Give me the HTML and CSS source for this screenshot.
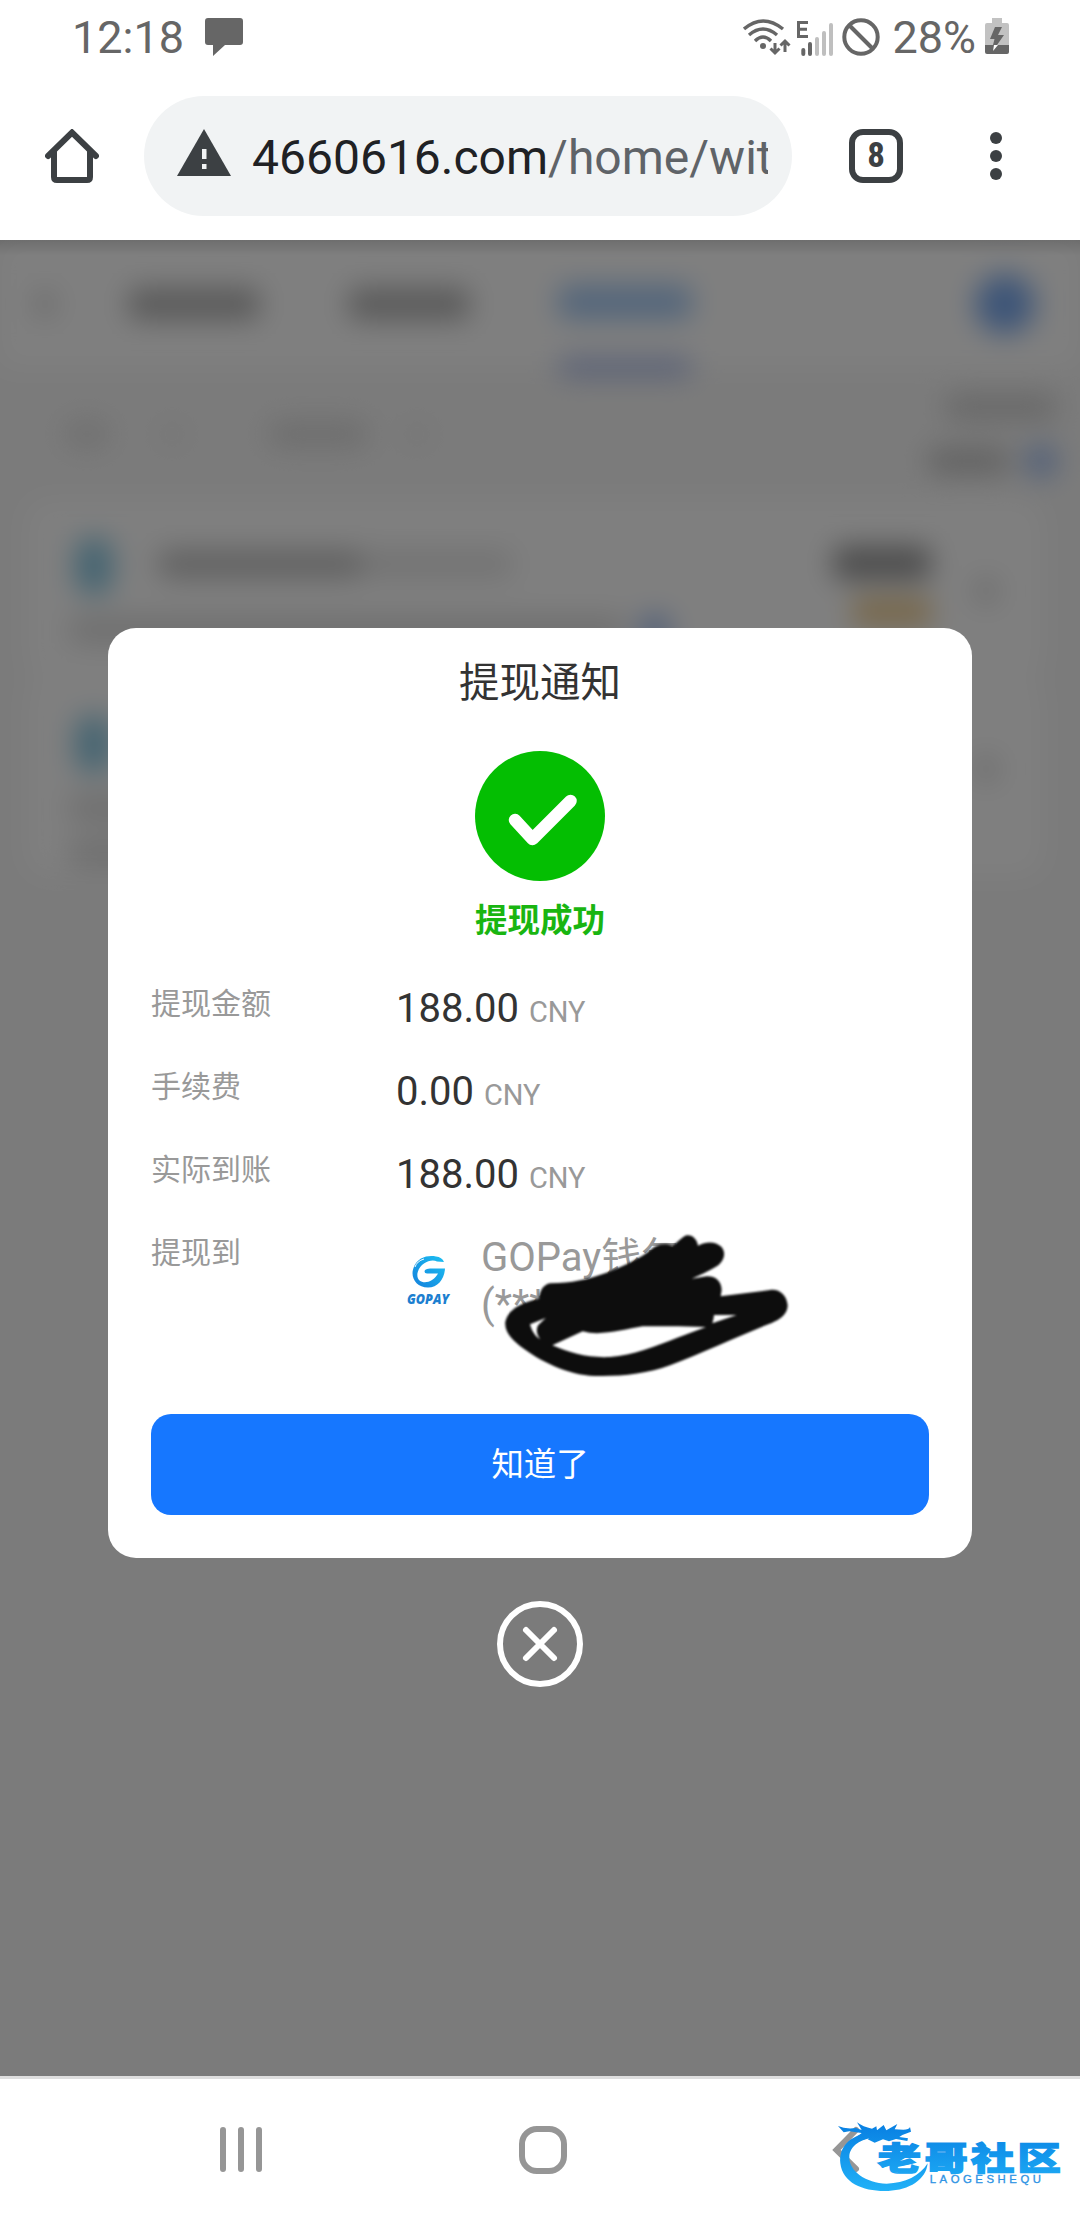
FILE: index.html
```html
<!DOCTYPE html>
<html lang="zh-CN">
<head>
    <meta charset="UTF-8">
    <meta name="viewport" content="width=device-width, initial-scale=1.0">
    <title>提现通知</title>
    <link rel="stylesheet" href="styles.css">
</head>
<body>
    <div class="status-bar">
        <span class="clock">12:18</span>
        <svg class="chat-icon" width="38" height="40" viewBox="0 0 38 40"><path d="M3 0H35Q38 0 38 3V24Q38 27 35 27H20L8 38V27H3Q0 27 0 24V3Q0 0 3 0Z" fill="#666"/></svg>
        <div class="status-right">
            <svg width="48" height="38" viewBox="0 0 48 38" fill="none" stroke="#666" stroke-width="3.4">
                <path d="M1 10Q20 -6 40 10M6 16Q20 4 34 16M12 22Q20 14 28 22"/>
                <circle cx="20" cy="27" r="3" fill="#666" stroke="none"/>
                <path d="M32 24V34M27.500 29.500L32 34L36.500 29.500M42 33V23M37.500 26.500L42 22L46.500 26.500" stroke-width="3"/>
            </svg>
            <svg class="signal" width="38" height="38" viewBox="0 0 38 38">
                <path d="M12 3.500H2.500V17.500H12M2.500 10.300H11" fill="none" stroke="#666" stroke-width="3"/>
                <path d="M7.300 31V35M14 25V35" stroke="#666" stroke-width="4" stroke-linecap="round"/>
                <path d="M21 20V35M28 14V35M35 6V35" stroke="#bfbfbf" stroke-width="4" stroke-linecap="round"/>
            </svg>
            <svg class="blocked" width="38" height="38" viewBox="0 0 38 38" fill="none" stroke="#666" stroke-width="4"><circle cx="19" cy="19" r="16.700"/><path d="M7 7L31 31"/></svg>
            <span class="percent">28%</span>
            <svg class="battery" width="24" height="37" viewBox="0 0 24 37">
                <path d="M7 0H17V5H22Q24 5 24 7V28H0V7Q0 5 2 5H7Z" fill="#c2c2c2"/>
                <path d="M0 27H24V34Q24 36 22 36H2Q0 36 0 34Z" fill="#666"/>
                <path d="M10 9H17L13 17H19L12 27H8L9.500 21H5Z" fill="#666"/>
                <path d="M9 27H13L8 33Z" fill="#fff"/>
            </svg>
        </div>
    </div>

    <div class="toolbar">
        <svg class="home" width="54" height="54" viewBox="0 0 54 54" fill="none" stroke="#3c4043" stroke-width="6"><path d="M3 27L27 3.500L51 27" stroke-linecap="round"/><path d="M9 22V48Q9 51 12 51H42Q45 51 45 48V22"/></svg>
        <div class="address">
            <svg class="warning" width="56" height="48" viewBox="0 0 56 48"><path d="M28 0L55 47H1Z" fill="#3c4043"/><path d="M26 20H30.500V30H26ZM26 35H30.500V40H26Z" fill="#f1f3f4"/></svg>
            <div class="url">4660616.com<span>/home/wit</span></div>
        </div>
        <div class="tabs">8</div>
        <svg class="more" width="12" height="48" viewBox="0 0 12 48" fill="#3c4043"><circle cx="6" cy="6" r="6"/><circle cx="6" cy="24" r="6"/><circle cx="6" cy="42" r="6"/></svg>
    </div>

    <div class="viewport">
        <div class="page">
            <div class="page-header">
                <i class="bar back"></i>
                <i class="bar tab"></i>
                <i class="bar tab tab-second"></i>
                <div class="tab-active"><i></i><i class="line"></i></div>
                <i class="service"></i>
            </div>
            <div class="filters">
                <i class="bar filter-a"></i>
                <i class="bar filter-arrow"></i>
                <i class="bar filter-b"></i>
                <i class="bar filter-arrow second"></i>
                <div class="summary">
                    <i class="bar"></i>
                    <div class="summary-row"><i class="bar"></i><i class="dot"></i></div>
                </div>
            </div>
            <div class="record">
                <div class="record-main">
                    <i class="coin"></i><i class="bar name"></i><i class="bar number"></i>
                    <div class="amount"><i class="bar"></i><i class="state"></i></div>
                    <i class="bar arrow"></i>
                </div>
                <div class="record-sub"><i class="bar"></i><i class="dot"></i></div>
            </div>
            <div class="record">
                <div class="record-main">
                    <i class="coin"></i><i class="bar name"></i><i class="bar number"></i>
                    <div class="amount"><i class="bar"></i><i class="state"></i></div>
                    <i class="bar arrow"></i>
                </div>
                <div class="record-sub"><i class="bar"></i></div>
                <div class="record-sub"><i class="bar"></i></div>
            </div>
        </div>

        <div class="overlay">
            <div class="modal">
                <div class="title">提现通知</div>
                <svg class="success-icon" width="130" height="130" viewBox="0 0 130 130"><circle cx="65" cy="65" r="65" fill="#04be02"/><path d="M40 69L57.500 88L95.500 50" fill="none" stroke="#fff" stroke-width="12.500" stroke-linecap="round" stroke-linejoin="round"/></svg>
                <div class="success-text">提现成功</div>
                <div class="row"><div class="label">提现金额</div><div class="value">188.00 <small>CNY</small></div></div>
                <div class="row"><div class="label">手续费</div><div class="value">0.00 <small>CNY</small></div></div>
                <div class="row"><div class="label">实际到账</div><div class="value">188.00 <small>CNY</small></div></div>
                <div class="row row-wallet">
                    <div class="label">提现到</div>
                    <svg class="gopay" width="64" height="64" viewBox="0 0 64 64">
                        <defs><linearGradient id="gp" x1="0" y1="1" x2="1" y2="0"><stop offset="0" stop-color="#1480dc"/><stop offset="1" stop-color="#1cc0f2"/></linearGradient></defs>
                        <path d="M48 14L41 13.500C35 10.500 24 15 21.500 25C20 34 29 36.500 36 32C39 30 41 27.500 42 25.500H31Q27.500 25.500 29 22Q30.500 20.500 34 20.500H49C48.500 31 42 39.500 32 39.500C20 39.500 14 29 17.500 20C21.500 9 32 7 40 8.500Q46 9 48 14Z" fill="url(#gp)"/>
                        <path d="M19 19Q21 13 28 11" fill="none" stroke="#fff" stroke-width="1"/>
                        <text x="11" y="55.500" textLength="42" lengthAdjust="spacingAndGlyphs">GOPAY</text>
                    </svg>
                    <div class="wallet">GOPay钱包<br>(****</div>
                    <svg class="scribble" width="450" height="200" viewBox="0 0 1350 600">
                        <path d="M540 250C610 248 645 240 710 218C770 195 810 175 842 150C858 132 888 128 908 138C922 126 936 112 946 107C965 101 982 118 984 137C1010 123 1036 124 1054 140C1070 158 1062 184 1040 199C1018 212 990 226 965 236L1010 229C1040 228 1054 246 1055 270L1052 289L1200 270C1228 266 1250 285 1253 316C1252 350 1220 364 1187 376C1100 412 985 464 900 496C830 522 750 530 675 528C590 525 510 483 450 438C418 412 403 390 406 365C413 330 455 306 507 297C509 276 517 255 540 250ZM527 354L480 373C485 393 498 412 511 418C500 405 497 388 505 375ZM638 394L547 436C600 459 652 474 720 471C790 466 855 439 920 414L1008 381C930 379 860 379 818 379C760 389 690 409 638 394ZM1032 345Q1031 358 1027 370L1100 345Z"/>
                    </svg>
                </div>
                <button class="confirm">知道了</button>
            </div>
            <svg class="close" width="86" height="86" viewBox="0 0 86 86" fill="none" stroke="#fff" stroke-width="6"><circle cx="43" cy="43" r="40"/><path d="M29 29L57 57M57 29L29 57" stroke-linecap="round"/></svg>
        </div>
    </div>

    <div class="nav-bar">
        <svg class="recents" width="42" height="45" viewBox="0 0 42 45" stroke="#969696" stroke-width="6" stroke-linecap="round"><path d="M3 3V42M21 3V42M39 3V42"/></svg>
        <i class="home-key"></i>
        <svg class="back-key" width="28" height="48" viewBox="0 0 28 48" fill="none" stroke="#969696" stroke-width="6"><path d="M24 4L4.500 24L24 43" stroke-linecap="round"/></svg>
        <svg class="watermark" width="300" height="130" viewBox="0 0 900 390">
            <defs><linearGradient id="wm" gradientUnits="userSpaceOnUse" x1="0" y1="100" x2="0" y2="310"><stop offset="0" stop-color="#087fe2"/><stop offset="1" stop-color="#22b3f8"/></linearGradient></defs>
            <g fill="url(#wm)">
                <path d="M270 125C205 140 177 170 181 220C188 282 255 306 325 303C388 300 438 270 443 220C420 257 376 280 320 281C258 279 207 244 208 201C208 168 244 145 285 143Z"/>
                <path d="M174 108Q196 118 228 114L245 120L231 97Q249 111 276 116L289 109L291 121L311 105L319 121L352 102L344 118L370 119Q387 119 390 111L393 125L367 135L358 141L384 145L382 153L348 147L327 154L309 148L284 158L263 148L272 141L249 149L230 141L245 129L208 124L191 127Z"/>
                <text class="brand" x="219" y="239" transform="scale(1.34 1)" textLength="410">老哥社区</text>
                <text class="brand-sub" x="449" y="280" textLength="334">LAOGESHEQU</text>
            </g>
        </svg>
    </div>
</body>
</html>
```
FILE: styles.css
```css
* {
    box-sizing: border-box;
}

body {
    margin: 0;
    width: 1080px;
    height: 2220px;
    overflow: hidden;
    background: #fff;
    font-family: Roboto, "Noto Sans CJK SC", sans-serif;
    display: flex;
    flex-direction: column;
}

svg, i {
    display: block;
    flex-shrink: 0;
}

/* phone status bar */
.status-bar {
    height: 76px;
    display: flex;
    align-items: center;
    padding: 0 71px 0 72px;
    color: #666;
    font-size: 45px;
}

.clock, .percent {
    margin-top: -1px;
}

.chat-icon {
    margin-left: 21px;
}

.status-right {
    margin-left: auto;
    display: flex;
    align-items: center;
}

.signal {
    margin-left: 5px;
}

.blocked {
    margin-left: 8px;
    margin-top: -3px;
}

.percent {
    margin-left: 12px;
}

.battery {
    margin-left: 9px;
    margin-top: -3px;
}

/* browser toolbar */
.toolbar {
    height: 164px;
    padding: 20px 0 24px 45px;
    display: flex;
    align-items: center;
}

.address {
    width: 648px;
    height: 120px;
    margin-left: 45px;
    padding: 0 24px 0 32px;
    border-radius: 60px;
    background: #f1f3f4;
    display: flex;
    align-items: center;
}

.warning {
    margin-top: -7px;
}

.url {
    flex: 1;
    margin-left: 20px;
    padding-top: 3px;
    overflow: hidden;
    white-space: nowrap;
    font-size: 48px;
    color: #202124;
}

.url span {
    color: #5f6368;
}

.tabs {
    width: 54px;
    height: 54px;
    margin-left: 57px;
    border: 6px solid #3c4043;
    border-radius: 14px;
    color: #3c4043;
    font-family: "Roboto Condensed", Roboto, sans-serif;
    font-size: 35px;
    font-weight: bold;
    line-height: 42px;
    text-align: center;
}

.more {
    margin-left: 87px;
}

.viewport {
    position: relative;
    height: 1836px;
    overflow: hidden;
    background: #f7f7f7;
}

/* record list behind the dialog */
.page {
    filter: blur(14px);
}

.bar {
    height: 28px;
    border-radius: 10px;
    background: #bbb;
}

.page-header {
    height: 127px;
    padding-left: 35px;
    background: #fff;
    display: flex;
    align-items: center;
}

.back {
    width: 20px;
    background: #d4d4d4;
}

.tab {
    width: 132px;
    height: 32px;
    margin: 0 0 0 73px;
    background: #b4b4b4;
}

.tab-second {
    width: 122px;
    margin-left: 88px;
}

.tab-active {
    width: 134px;
    height: 90px;
    margin: 52px 0 0 88px;
    display: flex;
    flex-direction: column;
    justify-content: space-between;
}

.tab-active i {
    height: 34px;
    border-radius: 10px;
    background: #a6cbf6;
}

.tab-active .line {
    height: 16px;
    background: #a3b6ea;
}

.service {
    width: 60px;
    height: 60px;
    margin-left: 283px;
    border-radius: 50%;
    background: #7cabf0;
}

.filters {
    height: 133px;
    padding: 0 23px 0 65px;
    display: flex;
    align-items: center;
}

.filter-a {
    width: 44px;
    background: #e0e0e0;
}

.filter-b {
    width: 100px;
    margin-left: 85px;
    background: #dcdcdc;
}

.filter-arrow {
    width: 22px;
    height: 20px;
    margin-left: 52px;
    background: #e6e6e6;
}

.filter-arrow.second {
    margin-left: 38px;
}

.summary {
    margin-left: auto;
    padding-top: 4px;
    display: flex;
    flex-direction: column;
    align-items: flex-end;
    gap: 25px;
}

.summary .bar {
    width: 112px;
    height: 26px;
    background: #d0d0d0;
}

.summary-row {
    display: flex;
    align-items: center;
    gap: 15px;
}

.summary-row .bar {
    width: 82px;
    background: #c4c4c4;
}

.dot {
    width: 32px;
    height: 32px;
    border-radius: 50%;
    background: #9bbaf0;
}

.record {
    min-height: 178px;
    margin: 0 38px 0 27px;
    padding: 35px 45px 0 42px;
    border-radius: 20px;
    background: #fff;
}

.record-main {
    height: 72px;
    display: flex;
}

.coin {
    width: 38px;
    height: 58px;
    margin: 2px 0 0 6px;
    border-radius: 18px;
    background: #8ccae4;
}

.name {
    width: 205px;
    margin: 15px 0 0 45px;
    background: #c2c2c2;
}

.number {
    width: 150px;
    margin-top: 15px;
    background: #e6e6e6;
}

.amount {
    margin-left: auto;
    display: flex;
    flex-direction: column;
    align-items: flex-end;
    gap: 18px;
}

.amount .bar {
    width: 98px;
    height: 34px;
    margin-top: 11px;
    background: #9a9a9a;
}

.state {
    width: 78px;
    height: 28px;
    background: #efcd90;
}

.arrow {
    width: 22px;
    margin: 42px 0 0 44px;
    background: #d8d8d8;
}

.record-sub {
    height: 45px;
    display: flex;
    align-items: center;
    gap: 14px;
}

.record-sub .bar {
    width: 556px;
    background: #dedede;
}

/* dialog */
.overlay {
    position: absolute;
    inset: 0;
    background: linear-gradient(rgba(0, 0, 0, 0.12), transparent 16px), rgba(0, 0, 0, 0.5);
    display: flex;
    flex-direction: column;
    align-items: center;
    padding-top: 388px;
}

.modal {
    position: relative;
    width: 864px;
    height: 930px;
    padding: 32px 43px 43px;
    border-radius: 28px;
    background: #fff;
    display: flex;
    flex-direction: column;
}

.title {
    line-height: 46px;
    font-size: 40.5px;
    color: #333;
    text-align: center;
}

.success-icon {
    margin: 45px auto 0;
}

.success-text {
    margin: 20px 0 41px;
    line-height: 40px;
    font-size: 32.5px;
    font-weight: bold;
    color: #19b511;
    text-align: center;
}

.row {
    height: 83px;
    display: flex;
    align-items: flex-start;
}

.row-wallet {
    position: relative;
    height: 183px;
}

.label {
    width: 245px;
    line-height: 44px;
    font-size: 30px;
    color: #999;
}

.value {
    padding-top: 3px;
    line-height: 47px;
    font-size: 40px;
    color: #333;
}

.value small {
    font-size: 29px;
    color: #999;
}

.gopay {
    margin-top: 17px;
}

.gopay text {
    font-family: "Open Sans", sans-serif;
    font-size: 14px;
    font-weight: 800;
    font-style: italic;
    fill: #1c7fd0;
}

.wallet {
    margin-left: 21px;
    padding-top: 3px;
    line-height: 47px;
    font-size: 40px;
    color: #999;
}

/* hand-drawn mark over the account number */
.scribble {
    position: absolute;
    left: 219px;
    top: -31px;
    fill: #0d0d0d;
    filter: blur(0.8px);
}

.confirm {
    height: 101px;
    padding: 0 0 7px;
    border: 0;
    border-radius: 20px;
    background: #1677ff;
    color: #fff;
    font-family: inherit;
    font-size: 32.4px;
}

.close {
    margin-top: 43px;
}

/* phone navigation keys */
.nav-bar {
    position: relative;
    height: 144px;
    padding-left: 220px;
    border-top: 3px solid #dedede;
    display: flex;
    align-items: center;
}

.home-key {
    width: 48px;
    height: 48px;
    margin-left: 257px;
    border: 6px solid #969696;
    border-radius: 18px;
}

.back-key {
    margin-left: 265px;
}

.watermark {
    position: absolute;
    left: 780px;
    top: 11px;
}

.brand {
    font-family: "Noto Sans CJK SC", sans-serif;
    font-size: 97px;
    font-weight: 900;
    stroke: url(#wm);
    stroke-width: 4px;
}

.brand-sub {
    font-family: "Liberation Sans", sans-serif;
    font-size: 34px;
    fill: #2f94e4;
    stroke: #2f94e4;
    stroke-width: 1px;
}
```
